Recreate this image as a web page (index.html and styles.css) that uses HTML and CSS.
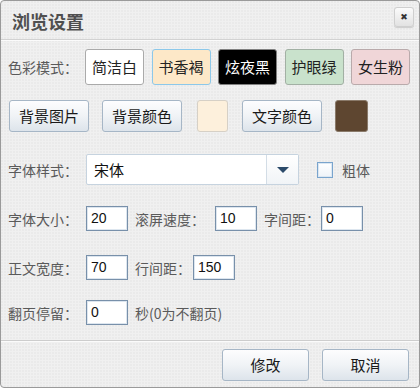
FILE: index.html
```html
<!DOCTYPE html>
<html lang="zh-CN">
<head>
<meta charset="utf-8">
<title>浏览设置</title>
<link rel="stylesheet" href="styles.css">
</head>
<body>
<div class="dialog">
  <div class="titlebar">
    <div class="title">浏览设置</div>
    <button class="close" type="button">✖</button>
  </div>
  <div class="content">
    <div class="row row-theme">
      <span class="label">色彩模式：</span>
      <button class="theme t-white" type="button">简洁白</button>
      <button class="theme t-brown" type="button">书香褐</button>
      <button class="theme t-black" type="button">炫夜黑</button>
      <button class="theme t-green" type="button">护眼绿</button>
      <button class="theme t-pink" type="button">女生粉</button>
    </div>
    <div class="row row-colors">
      <button class="btn btn-bgimg" type="button">背景图片</button>
      <button class="btn btn-bgcolor" type="button">背景颜色</button>
      <span class="swatch swatch-bg"></span>
      <button class="btn btn-textcolor" type="button">文字颜色</button>
      <span class="swatch swatch-text"></span>
    </div>
    <div class="row row-font">
      <span class="label">字体样式：</span>
      <div class="select">
        <span class="select-value">宋体</span>
        <span class="select-arrow"><span class="tri"></span></span>
      </div>
      <span class="checkbox"></span>
      <span class="check-label">粗体</span>
    </div>
    <div class="row row-inputs r4">
      <span class="label">字体大小：</span>
      <span class="input">20</span>
      <span class="label l-scroll">滚屏速度：</span>
      <span class="input in-scroll">10</span>
      <span class="label l-letter">字间距：</span>
      <span class="input in-letter">0</span>
    </div>
    <div class="row row-inputs r5">
      <span class="label">正文宽度：</span>
      <span class="input">70</span>
      <span class="label l-line">行间距：</span>
      <span class="input in-line">150</span>
    </div>
    <div class="row row-inputs r6">
      <span class="label">翻页停留：</span>
      <span class="input">0</span>
      <span class="label l-sec">秒(0为不翻页)</span>
    </div>
  </div>
  <div class="footer">
    <button class="btn btn-foot" type="button">修改</button>
    <button class="btn btn-foot btn-cancel" type="button">取消</button>
  </div>
</div>
</body>
</html>
```

FILE: styles.css
```css
html, body {
  margin: 0;
  padding: 0;
  background: #ffffff;
}

body {
  font-family: "Noto Sans CJK SC", "Noto Sans", sans-serif;
}

.dialog {
  width: 420px;
  height: 388px;
  box-sizing: border-box;
  border: 1px solid #9a9a9a;
  border-radius: 4px;
  background-color: #f0f0f0;
  background-image:
    radial-gradient(circle at 1px 1px, rgba(0,0,0,0.025) 1px, transparent 1px);
  background-size: 3px 3px;
  display: flex;
  flex-direction: column;
  overflow: hidden;
}

.titlebar {
  height: 38px;
  display: flex;
  align-items: flex-start;
  border-bottom: 1px solid #d2d2d2;
  box-shadow: 0 1px 0 #fbfbfb;
}

.title {
  padding-left: 11px;
  font-size: 18px;
  font-weight: bold;
  line-height: 40px;
  color: #4f4f4f;
}

.close {
  margin-left: auto;
  margin-top: 6px;
  margin-right: 5px;
  width: 20px;
  height: 20px;
  padding: 0;
  border: 1px solid #cfcfcf;
  border-radius: 3px;
  background: linear-gradient(#fbfbfb, #e2e2e2);
  box-shadow: 0 1px 1px rgba(0,0,0,0.15);
  font-size: 9px;
  line-height: 18px;
  color: #333;
  font-family: "DejaVu Sans", sans-serif;
}

.content {
  padding-left: 7px;
  flex: 1;
}

.row {
  display: flex;
  align-items: center;
}

.label {
  font-size: 14px;
  color: #5a5a5a;
  line-height: 20px;
  white-space: nowrap;
}

button {
  font-family: "Noto Sans CJK SC", sans-serif;
  cursor: default;
}

/* row 1 */
.row-theme {
  margin-top: 9px;
  height: 36px;
}
.row-theme .label {
  width: 77px;
}
.theme {
  width: 59px;
  height: 36px;
  margin-right: 7.5px;
  padding: 0;
  border: 1px solid #aaaaaa;
  border-radius: 3px;
  font-size: 15px;
  line-height: 34px;
  color: #222;
}
.t-white { background: #ffffff; }
.t-brown { background: #fde8c8; border-color: #8cc8ea; }
.t-black { background: #000000; color: #ffffff; border-color: #808080; }
.t-green { background: #c9e2cc; border-color: #a2b0a4; }
.t-pink { background: #f0d6d8; border-color: #b9aaab; }

/* generic button */
.btn {
  height: 32px;
  padding: 0;
  border: 1px solid #a6b6c6;
  border-radius: 3px;
  background: linear-gradient(#fdfdfe, #f0f3f6 50%, #dde4eb);
  font-size: 15px;
  line-height: 30px;
  color: #1a1a1a;
}

/* row 2 */
.row-colors {
  margin-top: 15px;
  height: 32px;
}
.row-colors .btn {
  width: 80px;
}
.btn-bgimg { margin-left: 1px; }
.btn-bgcolor { margin-left: 13px; }
.swatch {
  display: block;
  height: 32px;
  box-sizing: border-box;
  border-radius: 3px;
}
.swatch-bg {
  width: 31px;
  margin-left: 15px;
  background: #fdf0dc;
  border: 1px solid #d6d0c6;
}
.btn-textcolor { margin-left: 14px; }
.swatch-text {
  width: 33px;
  margin-left: 13px;
  background: #5e4630;
  border: 1px solid #8a7a6a;
}

/* row 3 */
.row-font {
  margin-top: 22px;
  height: 31px;
}
.row-font .label {
  width: 78px;
}
.select {
  width: 213px;
  height: 31px;
  box-sizing: border-box;
  border: 1px solid #c6d3df;
  border-radius: 2px;
  background: #ffffff;
  display: flex;
  align-items: center;
}
.select-value {
  flex: 1;
  padding-left: 7px;
  font-size: 15px;
  line-height: 20px;
  color: #111;
}
.select-arrow {
  width: 31px;
  height: 29px;
  border-left: 1px solid #d3dde6;
  background: linear-gradient(#ffffff, #f1f4f7);
  display: flex;
  align-items: center;
  justify-content: center;
}
.tri {
  width: 0;
  height: 0;
  border-left: 6px solid transparent;
  border-right: 6px solid transparent;
  border-top: 6px solid #2b4a6a;
}
.checkbox {
  display: block;
  width: 16px;
  height: 16px;
  box-sizing: border-box;
  margin-left: 18px;
  border: 1px solid #79a4cd;
  background: linear-gradient(#ffffff, #eef3f8);
  box-shadow: inset 0 0 0 1px #dbe7f2;
}
.check-label {
  margin-left: 9px;
  font-size: 14px;
  color: #5a5a5a;
  line-height: 20px;
}

/* input rows */
.row-inputs {
  height: 25px;
}
.row-inputs > .label:first-child {
  width: 78px;
}
.r4 { margin-top: 21px; }
.r5 { margin-top: 24px; }
.r6 { margin-top: 20px; }

.input {
  display: block;
  width: 42px;
  height: 25px;
  box-sizing: border-box;
  border: 1px solid #7890aa;
  box-shadow: inset 0 0 0 1px #dde6ef;
  background: #ffffff;
  padding-left: 4px;
  font-family: "Liberation Sans", "DejaVu Sans", sans-serif;
  font-size: 14px;
  line-height: 23px;
  color: #111;
}
.l-scroll { margin-left: 7px; }
.in-scroll { margin-left: 10px; }
.l-letter { margin-left: 7px; }
.in-letter { margin-left: 1px; }
.l-line { margin-left: 7px; }
.in-line { margin-left: 2px; }
.l-sec { margin-left: 7px; }

/* footer */
.footer {
  margin-top: 14px;
  border-top: 1px solid #cdcdcd;
  box-shadow: inset 0 1px 0 #fbfbfb;
  display: flex;
  justify-content: flex-end;
  padding: 8px 10px 0 0;
  height: 47px;
  box-sizing: border-box;
}
.btn-foot {
  width: 87px;
  height: 32px;
}
.btn-cancel {
  margin-left: 13px;
}
```
